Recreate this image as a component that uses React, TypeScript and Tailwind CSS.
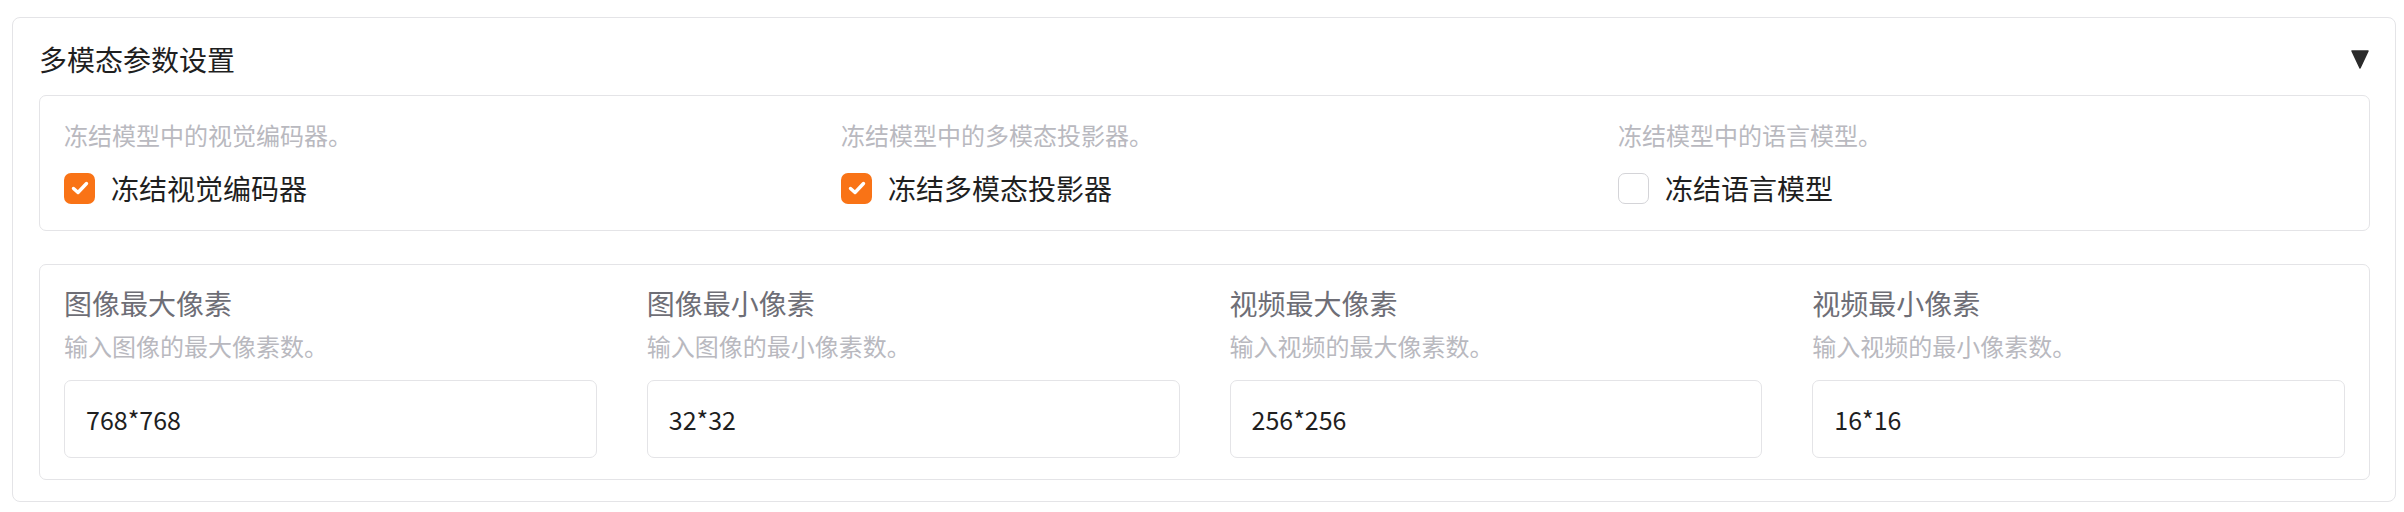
import React, { useState } from 'react';

const FONT = { fontFamily: '"Noto Sans CJK SC", "Noto Sans", sans-serif' };

type FreezeOption = {
  key: string;
  hint: string;
  label: string;
};

const freezeOptions: FreezeOption[] = [
  { key: 'vision', hint: '冻结模型中的视觉编码器。', label: '冻结视觉编码器' },
  { key: 'projector', hint: '冻结模型中的多模态投影器。', label: '冻结多模态投影器' },
  { key: 'language', hint: '冻结模型中的语言模型。', label: '冻结语言模型' },
];

const pixelFields = [
  { key: 'imageMax', label: '图像最大像素', hint: '输入图像的最大像素数。', value: '768*768' },
  { key: 'imageMin', label: '图像最小像素', hint: '输入图像的最小像素数。', value: '32*32' },
  { key: 'videoMax', label: '视频最大像素', hint: '输入视频的最大像素数。', value: '256*256' },
  { key: 'videoMin', label: '视频最小像素', hint: '输入视频的最小像素数。', value: '16*16' },
];

// Case à cocher orange
const CheckBox: React.FC<{ checked: boolean; onToggle: () => void }> = ({ checked, onToggle }) => (
  <button
    type="button"
    onClick={onToggle}
    className={
      checked
        ? 'w-[31px] h-[31px] rounded-[7px] bg-[#f97316] flex items-center justify-center shrink-0'
        : 'w-[31px] h-[31px] rounded-[7px] bg-white border-[1.5px] border-[#d4d4d8] shrink-0'
    }
  >
    {checked && (
      <svg width="22" height="22" viewBox="0 0 22 22" fill="none">
        <path d="M4.5 11.5 L9 15.5 L17.5 6.5" stroke="white" strokeWidth="3.4" strokeLinecap="round" strokeLinejoin="round" />
      </svg>
    )}
  </button>
);

export default function App() {
  const [open, setOpen] = useState(true);
  const [frozen, setFrozen] = useState<Record<string, boolean>>({
    vision: true,
    projector: true,
    language: false,
  });
  const [values, setValues] = useState<Record<string, string>>(
    Object.fromEntries(pixelFields.map((f) => [f.key, f.value]))
  );

  return (
    <div className="bg-white pl-[12px] pr-[8px] pt-[17px]" style={FONT}>
      <div className="border border-[#e4e4e7] rounded-[8px] pl-[26px] pr-[25px] pb-[21px]">
        {/* En-tête */}
        <div className="flex items-center justify-between pt-[23px] h-[59px] mb-[18px]">
          <span className="text-[28px] leading-[36px] text-[#1f1f1f]">多模态参数设置</span>
          <button type="button" onClick={() => setOpen(!open)} className="mr-[1px]">
            <svg width="18" height="19" viewBox="0 0 18 19">
              <polygon points="1,1 17,1 9,18" fill="#2b2b2b" stroke="#2b2b2b" strokeWidth="1.5" strokeLinejoin="round" />
            </svg>
          </button>
        </div>

        {open && (
          <>
            {/* Options de gel */}
            <div className="border border-[#e4e4e7] rounded-[7px] px-[24px] pt-[23px] pb-[24px] grid grid-cols-3 gap-x-[50px]">
              {freezeOptions.map((opt) => (
                <div key={opt.key}>
                  <div className="text-[24px] leading-[32px] text-[#b9b9bf]">{opt.hint}</div>
                  <label className="mt-[19px] h-[36px] flex items-center gap-[16px] cursor-pointer">
                    <CheckBox
                      checked={frozen[opt.key]}
                      onToggle={() => setFrozen({ ...frozen, [opt.key]: !frozen[opt.key] })}
                    />
                    <span className="text-[28px] leading-[36px] text-[#1f1f1f]">{opt.label}</span>
                  </label>
                </div>
              ))}
            </div>

            {/* Pixels */}
            <div className="mt-[33px] border border-[#e4e4e7] rounded-[7px] px-[24px] pt-[20px] pb-[21px] grid grid-cols-4 gap-x-[50px]">
              {pixelFields.map((f) => (
                <div key={f.key}>
                  <div className="text-[28px] leading-[36px] text-[#6e6e76]">{f.label}</div>
                  <div className="mt-[9px] text-[24px] leading-[32px] text-[#b9b9bf]">{f.hint}</div>
                  <input
                    value={values[f.key]}
                    onChange={(e) => setValues({ ...values, [f.key]: e.target.value })}
                    className="mt-[18px] w-full h-[78px] border border-[#e4e4e7] rounded-[7px] px-[21px] text-[25px] text-[#1f1f1f] outline-none"
                    style={FONT}
                  />
                </div>
              ))}
            </div>
          </>
        )}
      </div>
    </div>
  );
}
